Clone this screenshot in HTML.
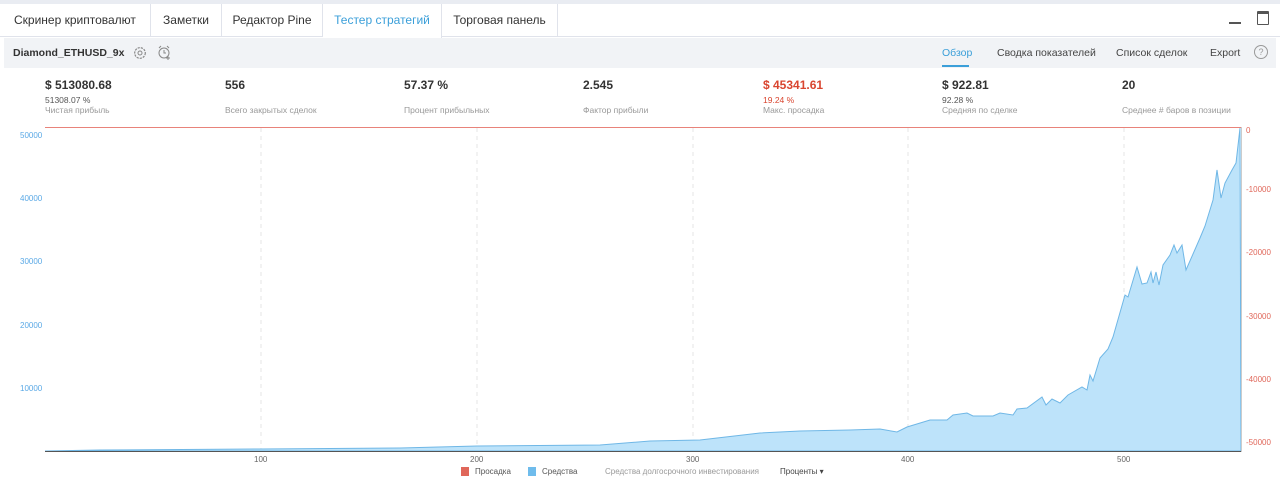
<!DOCTYPE html>
<html><head><meta charset="utf-8"><style>
*{margin:0;padding:0;box-sizing:border-box}
body{width:1280px;height:479px;background:#fff;font-family:"Liberation Sans","DejaVu Sans",sans-serif;position:relative;overflow:hidden;color:#333}
.a{position:absolute;white-space:nowrap}
.tab{position:absolute;top:4px;height:33px;border-right:1px solid #e0e3eb;font-size:12px;line-height:32px;color:#333;text-align:center}
.v{font-size:12px;font-weight:bold;color:#333;top:78px}
.s{font-size:8.5px;color:#555;top:95px}
.l{font-size:8.5px;color:#999;top:105px}
.yl{font-size:8px;color:#5aa9e6;left:20px}
.yr{font-size:8px;color:#e0675a;left:1246px}
.xl{font-size:8px;color:#666;top:455px}
.t{font-size:10.5px;color:#444;top:47px}
</style></head><body>
<div class="a" style="left:0;top:0;width:1280px;height:4px;background:#e9ecf2"></div>
<div class="a" style="left:0;top:36px;width:1280px;height:1px;background:#e0e3eb"></div>
<div class="tab" style="left:0;width:151px;text-align:left;padding-left:14px">Скринер криптовалют <span style="font-size:9px;color:#888;margin-left:4px">&#x2335;</span></div>
<div class="tab" style="left:151px;width:71px">Заметки</div>
<div class="tab" style="left:222px;width:101px">Редактор Pine</div>
<div class="tab" style="left:323px;width:119px;color:#3b9fd9;background:#fff;height:34px">Тестер стратегий</div>
<div class="tab" style="left:442px;width:116px">Торговая панель</div>
<div class="a" style="left:1229px;top:22px;width:12px;height:1.5px;background:#555"></div>
<div class="a" style="left:1257px;top:11px;width:12px;height:14px;border:1.2px solid #555;border-top-width:3px;border-radius:1px"></div>
<div class="a" style="left:4px;top:38px;width:1272px;height:30px;background:#f1f3f6"></div>
<div class="a" style="left:13px;top:47px;font-size:10.5px;font-weight:bold;color:#333">Diamond_ETHUSD_9x</div>
<svg class="a" style="left:133px;top:46px" width="14" height="14" viewBox="0 0 14 14"><circle cx="7" cy="7" r="5.3" fill="none" stroke="#888" stroke-width="1.2" stroke-dasharray="2.2 1"/><circle cx="7" cy="7" r="2" fill="none" stroke="#888"/></svg>
<svg class="a" style="left:157px;top:45px" width="15" height="15" viewBox="0 0 15 15"><circle cx="7" cy="8" r="5" fill="none" stroke="#888"/><path d="M2 3l2-2M12 3l-2-2M7 5v3h2M11 11v4M9 13h4" stroke="#888" fill="none"/></svg>
<div class="a t" style="left:942px;color:#3b9fd9">Обзор</div>
<div class="a" style="left:942px;top:65px;width:27px;height:2px;background:#3b9fd9"></div>
<div class="a t" style="left:997px">Сводка показателей</div>
<div class="a t" style="left:1116px">Список сделок</div>
<div class="a t" style="left:1210px">Export</div>
<div class="a" style="left:1254px;top:45px;width:14px;height:14px;border:1px solid #999;border-radius:50%;font-size:9px;line-height:12px;text-align:center;color:#999">?</div>

<div class="a v" style="left:45px">$ 513080.68</div><div class="a s" style="left:45px">51308.07 %</div><div class="a l" style="left:45px">Чистая прибыль</div>
<div class="a v" style="left:225px">556</div><div class="a l" style="left:225px">Всего закрытых сделок</div>
<div class="a v" style="left:404px">57.37 %</div><div class="a l" style="left:404px">Процент прибыльных</div>
<div class="a v" style="left:583px">2.545</div><div class="a l" style="left:583px">Фактор прибыли</div>
<div class="a v" style="left:763px;color:#d9452f">$ 45341.61</div><div class="a s" style="left:763px;color:#d9452f">19.24 %</div><div class="a l" style="left:763px">Макс. просадка</div>
<div class="a v" style="left:942px">$ 922.81</div><div class="a s" style="left:942px">92.28 %</div><div class="a l" style="left:942px">Средняя по сделке</div>
<div class="a v" style="left:1122px">20</div><div class="a l" style="left:1122px">Среднее # баров в позиции</div>

<svg class="a" style="left:0;top:0" width="1280" height="479">
<g stroke="#e6e6e6" stroke-dasharray="4 4"><line x1="261" y1="128" x2="261" y2="451"/><line x1="477" y1="128" x2="477" y2="451"/><line x1="693" y1="128" x2="693" y2="451"/><line x1="908" y1="128" x2="908" y2="451"/><line x1="1124" y1="128" x2="1124" y2="451"/></g>
<path d="M45 451 L100 450 L260 449 L400 448 L477 446 L600 445 L650 441 L700 440 L760 433 L800 431 L850 430 L880 429 L897 432 L907 427 L930 420 L947 420 L953 415 L967 413 L973 416 L993 416 L1000 413 L1013 415 L1017 409 L1027 408 L1042 397 L1046 405 L1052 399 L1060 403 L1068 395 L1082 387 L1087 390 L1090 375 L1093 381 L1100 358 L1108 349 L1113 337 L1125 295 L1128 297 L1137 267 L1142 284 L1147 283 L1151 272 L1153 283 L1156 272 L1159 285 L1163 265 L1170 255 L1174 245 L1177 253 L1182 245 L1186 270 L1200 238 L1205 226 L1213 200 L1217 170 L1221 198 L1225 183 L1232 170 L1236 163 L1240 128 L1241 451 Z" fill="#bde3fa" stroke="#6fb7e6" stroke-width="1"/>
<rect x="45" y="127" width="1196" height="1" fill="#e8837a"/>
<rect x="45" y="451" width="1196" height="1" fill="#555"/>
<rect x="1241" y="127" width="1" height="325" fill="#ccc"/>
</svg>
<div class="a yl" style="top:131px">50000</div><div class="a yl" style="top:194px">40000</div><div class="a yl" style="top:257px">30000</div><div class="a yl" style="top:321px">20000</div><div class="a yl" style="top:384px">10000</div>
<div class="a yr" style="top:126px">0</div><div class="a yr" style="top:185px">-10000</div><div class="a yr" style="top:248px">-20000</div><div class="a yr" style="top:312px">-30000</div><div class="a yr" style="top:375px">-40000</div><div class="a yr" style="top:438px">-50000</div>
<div class="a xl" style="left:254px">100</div><div class="a xl" style="left:470px">200</div><div class="a xl" style="left:686px">300</div><div class="a xl" style="left:901px">400</div><div class="a xl" style="left:1117px">500</div>
<div class="a" style="left:461px;top:467px;width:8px;height:9px;background:#e0675a"></div>
<div class="a" style="left:475px;top:467px;font-size:8px;color:#555">Просадка</div>
<div class="a" style="left:528px;top:467px;width:8px;height:9px;background:#6fbcec"></div>
<div class="a" style="left:542px;top:467px;font-size:8px;color:#555">Средства</div>
<div class="a" style="left:605px;top:467px;font-size:8px;color:#999">Средства долгосрочного инвестирования</div>
<div class="a" style="left:780px;top:467px;font-size:8px;color:#444">Проценты ▾</div>
</body></html>
